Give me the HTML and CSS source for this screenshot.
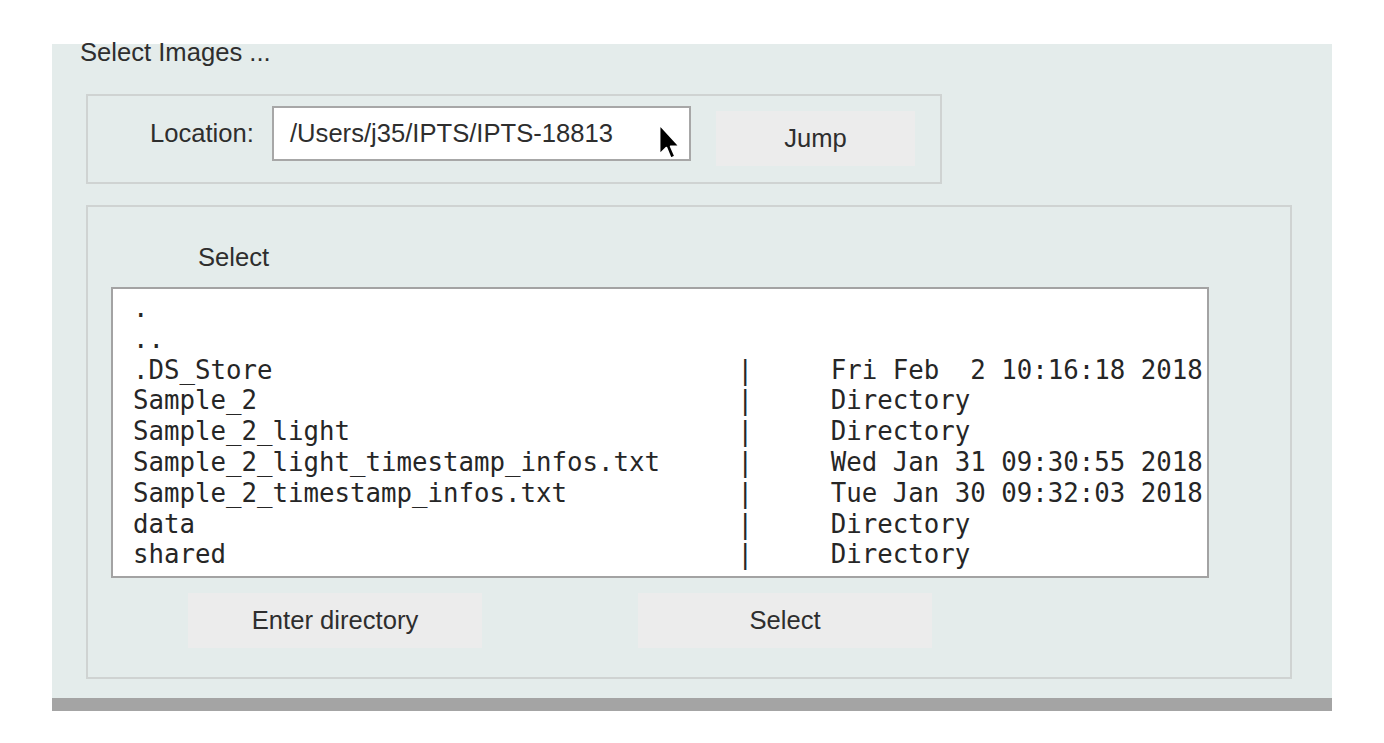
FILE: index.html
```html
<!DOCTYPE html>
<html>
<head>
<meta charset="utf-8">
<title>Select Images</title>
<link rel="stylesheet" href="styles.css">
</head>
<body>
<div class="panel">
  <div class="title">Select Images ...</div>
  <div class="box location-box">
    <span class="loc-label">Location:</span>
    <div class="field">
      <span class="field-text">/Users/j35/IPTS/IPTS-18813</span>
      <svg class="cursor" viewBox="0 0 20 32" width="25" height="40" aria-hidden="true">
        <path d="M2 2 L2 26 L7.5 20.5 L11 29 L14.5 27.5 L11 19.5 L18 19.5 Z" fill="#000" stroke="#fff" stroke-width="1.5" stroke-linejoin="round"/>
      </svg>
    </div>
    <div class="btn jump">Jump</div>
  </div>
  <div class="box file-box">
    <div class="select-label">Select</div>
    <div class="listbox">.
..
.DS_Store                              |     Fri Feb  2 10:16:18 2018
Sample_2                               |     Directory
Sample_2_light                         |     Directory
Sample_2_light_timestamp_infos.txt     |     Wed Jan 31 09:30:55 2018
Sample_2_timestamp_infos.txt           |     Tue Jan 30 09:32:03 2018
data                                   |     Directory
shared                                 |     Directory</div>
    <div class="actions">
      <div class="btn wide">Enter directory</div>
      <div class="btn wide">Select</div>
    </div>
  </div>
</div>
<div class="shadow-bar"></div>
</body>
</html>
```

FILE: styles.css
```css
html, body {
  margin: 0;
  padding: 0;
  background: #ffffff;
}

body {
  padding-top: 44px;
  font-family: "Liberation Sans", Arial, sans-serif;
  font-size: 25.6px;
  color: #2e2e2e;
}

.panel {
  margin-left: 52px;
  width: 1280px;
  background: #e4eceb;
  padding: 0 0 19px 34px;
  box-sizing: border-box;
}

.title {
  line-height: 16px;
  height: 16px;
  margin-left: -6px;
  white-space: nowrap;
}

.box {
  border: 2px solid #cfd3d2;
  box-sizing: border-box;
}

.location-box {
  margin-top: 34px;
  width: 856px;
  height: 90px;
  display: flex;
  align-items: flex-start;
  padding: 10px 0 0 62px;
}

.loc-label {
  line-height: 55px;
  width: 104px;
  margin-right: 18px;
  white-space: nowrap;
}

.field {
  position: relative;
  width: 419px;
  height: 55px;
  box-sizing: border-box;
  border: 2px solid #a7a7a7;
  background: #ffffff;
  padding-left: 16px;
  line-height: 51px;
  white-space: nowrap;
}

.cursor {
  position: absolute;
  left: 383px;
  top: 14px;
}

.btn {
  height: 55px;
  line-height: 55px;
  background: #ececec;
  text-align: center;
  white-space: nowrap;
}

.jump {
  width: 199px;
  margin-left: 25px;
  margin-top: 5px;
}

.file-box {
  margin-top: 21px;
  width: 1206px;
  padding: 36px 0 29px 23px;
}

.select-label {
  line-height: 28px;
  height: 28px;
  margin-left: 87px;
  margin-bottom: 16px;
}

.listbox {
  width: 1098px;
  height: 291px;
  box-sizing: border-box;
  border: 2px solid #a3a3a3;
  background: #ffffff;
  padding: 4px 0 0 20px;
  font-family: "DejaVu Sans Mono", "Liberation Mono", monospace;
  font-size: 25.75px;
  line-height: 30.8px;
  white-space: pre;
  overflow: hidden;
  color: #262626;
}

.actions {
  display: flex;
  gap: 156px;
  margin-top: 15px;
  margin-left: 77px;
}

.wide {
  width: 294px;
}

.shadow-bar {
  margin-left: 52px;
  width: 1280px;
  height: 13px;
  background: #a4a4a4;
}
```
